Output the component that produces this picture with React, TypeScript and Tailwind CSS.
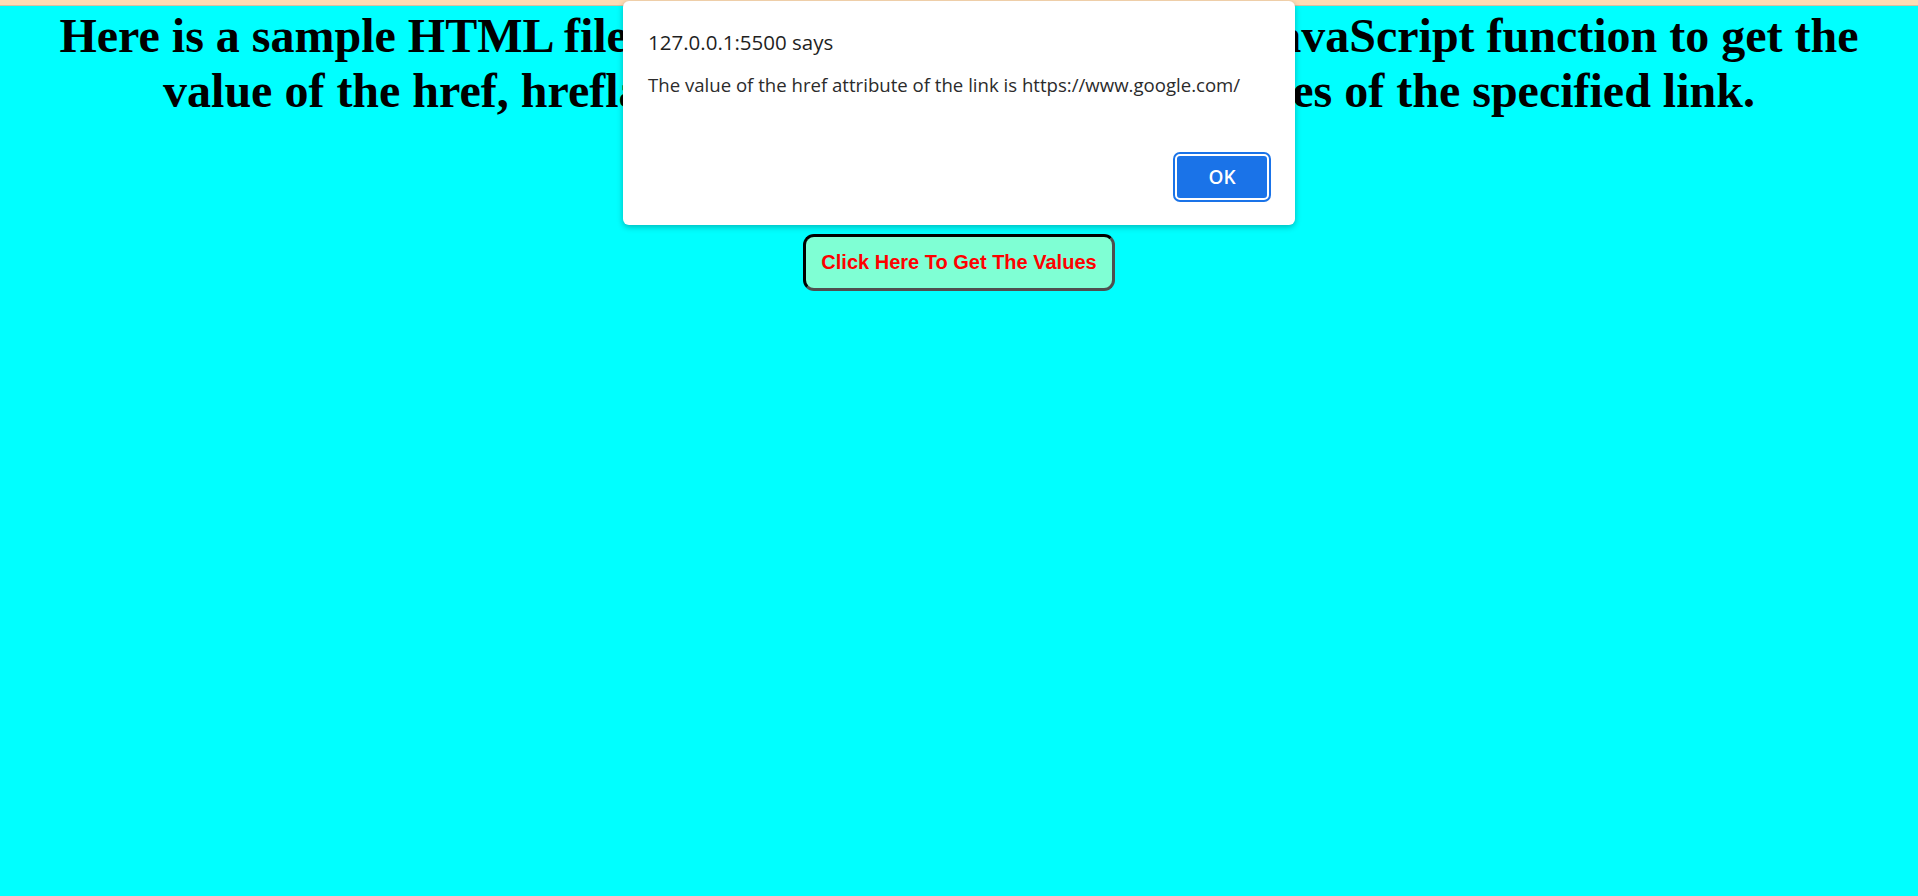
export default function App() {
  return (
    <div className="relative h-screen overflow-hidden bg-[#00ffff] font-['Liberation_Serif',serif] text-black">
      <div className="h-[5px] bg-[#fedcb4]" />
      <div className="h-px bg-[#dcbf9f]" />

      <h1 className="mt-[2px] px-3 text-center text-[48px] font-bold leading-[55px]">
        Here is a sample HTML file that has a link element, and a JavaScript function to get the value of the href,
        hreflang, rel, target, and type attributes of the specified link.
      </h1>

      <p className="mt-[36px] text-center text-[24px] leading-[28px]">
        <a href="https://www.google.com/" className="text-[#0000ee] underline">
          Google
        </a>
      </p>

      <div className="mt-[52px] flex justify-center">
        <button className="rounded-[11px] border-[3px] border-t-black border-l-black border-r-[#4f4f4f] border-b-[#4f4f4f] bg-[#7fffd4] px-[15px] py-[13px] font-['Liberation_Sans',Arial,sans-serif] text-[20px] leading-[25px] font-bold text-[#ff0000]">
          Click Here To Get The Values
        </button>
      </div>

      {/* browser alert sits over the page */}
      <div className="absolute top-px left-[623px] flex h-[224px] w-[672px] flex-col rounded-[6px] bg-white pt-[27px] pr-[26px] pb-[25px] pl-[25px] font-['Open_Sans','Noto_Sans',sans-serif] shadow-[0_2px_6px_rgba(0,0,0,0.28)]">
        <div className="text-[20.5px] leading-[28px] text-[#1f1f1f]">127.0.0.1:5500 says</div>
        <div className="mt-[16px] text-[18.6px] leading-[26px] text-[#2b2b2b]">
          The value of the href attribute of the link is https://www.google.com/
        </div>
        <div className="mt-auto flex justify-end">
          <button className="h-[46px] w-[94px] rounded-[5px] border-2 border-white bg-[#1a73e8] text-[19px] font-semibold text-white shadow-[0_0_0_2px_#1a73e8]">
            OK
          </button>
        </div>
      </div>
    </div>
  );
}
